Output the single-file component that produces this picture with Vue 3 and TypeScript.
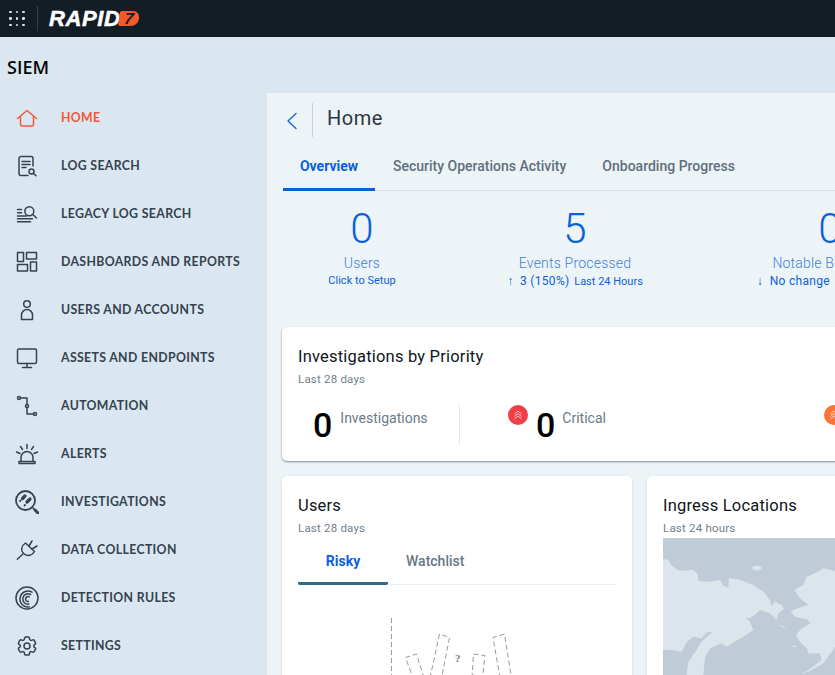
<script setup lang="ts">
const stroke = 'fill="none" stroke="currentColor" stroke-width="1.5" stroke-linecap="round" stroke-linejoin="round"'

const navItems = [
  { label: 'HOME', active: true, icon: `<g ${stroke}><path d="M2.5 12.5 12 4.5l9.500 8"/><path d="M5.500 10.500v8a1.500 1.500 0 0 0 1.500 1.500h10a1.500 1.500 0 0 0 1.500-1.500v-8"/></g>` },
  { label: 'LOG SEARCH', icon: `<g ${stroke}><path d="M18 12V4.500A2 2 0 0 0 16 2.500H6A2 2 0 0 0 4 4.500v15A2 2 0 0 0 6 21.500h7"/><path d="M7 7.500h8M7 10.500h8M7 13.500h4"/><circle cx="16.500" cy="17.500" r="2.500"/><path d="m18.500 19.500 2.500 2.300"/></g>` },
  { label: 'LEGACY LOG SEARCH', icon: `<g ${stroke}><circle cx="14.300" cy="9.200" r="4.500"/><path d="m17.800 12.500 3.700 3.500M2.500 7.500h4M2.500 10.700h4M2.500 14h9M2.500 16.800h15M2.500 19.700h13"/></g>` },
  { label: 'DASHBOARDS AND REPORTS', icon: `<g ${stroke}><rect x="2.500" y="2.500" width="6" height="9"/><rect x="11.500" y="2.500" width="10" height="6.500"/><rect x="2.500" y="14.500" width="10" height="6.500"/><rect x="15.500" y="12" width="6" height="9"/></g>` },
  { label: 'USERS AND ACCOUNTS', icon: `<g ${stroke}><circle cx="12" cy="6" r="3.300"/><path d="M6.500 21.500v-4.500a5.500 5.500 0 0 1 11 0v4.500z"/></g>` },
  { label: 'ASSETS AND ENDPOINTS', icon: `<g ${stroke}><rect x="2.500" y="3" width="19" height="14.500" rx="1.500"/><path d="M12 17.500v4M7.500 21.500h9"/></g>` },
  { label: 'AUTOMATION', icon: `<g ${stroke}><circle cx="4" cy="4" r="1.500"/><circle cx="12" cy="12" r="1.500"/><circle cx="20" cy="20" r="1.500"/><path d="M5.500 4H12v6.500M12 13.500V20h6.500"/></g>` },
  { label: 'ALERTS', icon: `<g ${stroke}><path d="M6 19v-3.500a6 6 0 0 1 12 0V19"/><path d="M4 21.500V19.500h16v2zM12 2.500v4M5.500 4.500l2 3M18.500 4.500l-2 3M1.500 10l3.500 1.500M22.500 10 19 11.500"/></g>` },
  { label: 'INVESTIGATIONS', icon: `<g fill="none" stroke="currentColor" stroke-linecap="round"><circle cx="10.500" cy="10.500" r="9.500" stroke-width="1.800"/><path d="m17.500 17.500 2 2" stroke-width="1.500"/><path d="m20 20 3 3" stroke-width="3"/><path d="m7.500 8.500 2.500-2.500M12 12l3-3" stroke-width="3.200"/><path d="m5 11 .5-.5M9.500 15.500l.5-.5" stroke-width="1.800"/></g>` },
  { label: 'DATA COLLECTION', icon: `<g ${stroke}><path d="m2.300 21.300 5.400-5"/><path d="M10.500 5 19.500 13.500C17 18 11.500 18.500 8.500 15.500S6 8 10.500 5Z"/><path d="m14 8 3-5M17 11l5-3"/></g>` },
  { label: 'DETECTION RULES', icon: `<g fill="none" stroke="currentColor" stroke-width="1.500" stroke-linecap="round"><circle cx="12" cy="12" r="11"/><path d="M17 6.100A8 8 0 1 0 14.400 20.900"/><path d="M15.600 8.500A5.200 5.200 0 1 0 13.900 18.100"/><path d="M14.250 10.800A2.500 2.500 0 1 0 13.400 15.500"/></g>` },
  { label: 'SETTINGS', icon: `<g ${stroke}><path d="M9.594 3.940c.09-.542.56-.94 1.110-.94h2.593c.55 0 1.020.398 1.110.94l.213 1.281c.063.374.313.686.645.870.074.040.147.083.22.127.324.196.72.257 1.075.124l1.217-.456a1.125 1.125 0 011.370.490l1.296 2.247a1.125 1.125 0 01-.26 1.431l-1.003.827c-.293.240-.438.613-.431.992a6.759 6.759 0 010 .255c-.007.378.138.750.43.990l1.005.828c.424.350.534.954.26 1.430l-1.298 2.247a1.125 1.125 0 01-1.369.491l-1.217-.456c-.355-.133-.750-.072-1.076.124a6.570 6.570 0 01-.22.128c-.331.183-.581.495-.644.869l-.213 1.280c-.09.543-.56.941-1.110.941h-2.594c-.55 0-1.020-.398-1.110-.940l-.213-1.281c-.062-.374-.312-.686-.644-.870a6.520 6.520 0 01-.22-.127c-.325-.196-.72-.257-1.076-.124l-1.217.456a1.125 1.125 0 01-1.369-.490l-1.297-2.247a1.125 1.125 0 01.26-1.431l1.004-.827c.292-.240.437-.613.43-.992a6.932 6.932 0 010-.255c.007-.378-.138-.750-.43-.990l-1.004-.828a1.125 1.125 0 01-.26-1.430l1.297-2.247a1.125 1.125 0 011.370-.491l1.216.456c.356.133.751.072 1.076-.124.072-.044.146-.087.22-.128.332-.183.582-.495.644-.869l.214-1.281z"/><circle cx="12" cy="12" r="3"/></g>` }
]

const pageTabs = ['Overview', 'Security Operations Activity', 'Onboarding Progress']
</script>

<template>
  <div class="app">
    <header class="topbar">
      <div class="launcher">
        <i v-for="n in 9" :key="n"></i>
      </div>
      <div class="logo">
        <span class="logo-word">RAPID</span><span class="logo-seven">7</span>
      </div>
    </header>

    <div class="body">
      <aside class="sidebar">
        <div class="product">SIEM</div>
        <nav>
          <a v-for="item in navItems" :key="item.label" class="nav-item" :class="{ active: item.active }">
            <svg class="nav-icon" viewBox="0 0 24 24" v-html="item.icon"></svg>
            <span>{{ item.label }}</span>
          </a>
        </nav>
      </aside>

      <main class="main">
        <div class="page-head">
          <svg class="back" viewBox="0 0 12 18"><path d="M10 1.500 2 9l8 7.500" fill="none" stroke="#1767d8" stroke-width="1.400" stroke-linecap="round" stroke-linejoin="round" /></svg>
          <h1>Home</h1>
        </div>

        <div class="page-tabs">
          <div v-for="(tab, i) in pageTabs" :key="tab" class="page-tab" :class="{ on: i === 0 }">{{ tab }}</div>
        </div>

        <div class="stats">
          <div class="stat first">
            <div class="stat-num">0</div>
            <div class="stat-label">Users</div>
            <div class="stat-sub">Click to Setup</div>
          </div>
          <div class="stat second">
            <div class="stat-num">5</div>
            <div class="stat-label">Events Processed</div>
            <div class="stat-sub"><span class="delta"><strong>↑</strong>&nbsp; 3 (150%)</span> Last 24 Hours</div>
          </div>
          <div class="stat third">
            <div class="stat-num">0</div>
            <div class="stat-label">Notable Behaviors</div>
            <div class="stat-sub"><span class="delta"><strong>↓</strong>&nbsp; No change</span> Last 24 Hours</div>
          </div>
        </div>

        <section class="card priority">
          <h2>Investigations by Priority</h2>
          <p class="range">Last 28 days</p>
          <div class="priority-row">
            <div class="count total">
              <b>0</b><span>Investigations</span>
            </div>
            <div class="count level">
              <em class="badge red"><svg viewBox="0 0 12 12"><path d="M2.500 5 6 2l3.500 3M2.500 7.500 6 4.500l3.500 3M2.500 10 6 7l3.500 3" fill="none" stroke="#fff" stroke-opacity=".8" stroke-width=".9" /></svg></em>
              <b>0</b><span class="tight">Critical</span>
            </div>
            <div class="count level">
              <em class="badge orange"><svg viewBox="0 0 12 12"><path d="M2.500 5 6 2l3.500 3M2.500 7.500 6 4.500l3.500 3M2.500 10 6 7l3.500 3" fill="none" stroke="#fff" stroke-opacity=".8" stroke-width=".9" /></svg></em>
              <b>0</b><span class="tight">High</span>
            </div>
          </div>
        </section>

        <div class="lower">
          <section class="card users">
            <h2>Users</h2>
            <p class="range">Last 28 days</p>
            <div class="user-tabs">
              <div class="user-tab on">Risky</div>
              <div class="user-tab">Watchlist</div>
            </div>
            <!-- leeres Diagramm, gestrichelte Balken -->
            <svg class="empty-chart" viewBox="0 0 318 60">
              <g fill="none" stroke="#8b8f93" stroke-width=".9" stroke-dasharray="5 3">
                <path d="M93.500 0v60" />
                <path d="M126 60 118.500 36 107.500 39.500 115 60" />
                <path d="M132 60 141.500 16 151.500 19.500 143.500 60" />
                <path d="M174 60 175.500 36 187 37.500 184.500 60" />
                <path d="M202 60 195 19.500 206.500 16 213.500 60" />
              </g>
              <text x="157" y="44" class="mark">?</text>
            </svg>
          </section>

          <section class="card ingress">
            <h2>Ingress Locations</h2>
            <p class="range">Last 24 hours</p>
            <svg class="map" viewBox="9 9 516 411" preserveAspectRatio="xMinYMin slice">
              <rect x="9" y="9" width="516" height="411" fill="#bfccd8" />
              <g fill="#dde5ec">
                <path d="M9 72 25 75 32 88 45 100 60 108 100 105 113 118 115 138 150 140 180 135 190 152 205 158 207 130 240 135 280 150 310 170 330 195 335 215 345 200 365 210 372 222 355 235 350 255 330 235 300 225 290 235 270 250 255 248 268 258 280 285 250 305 215 325 200 335 185 325 150 340 135 365 130 420 80 420 85 380 110 345 125 320 158 290 140 292 125 310 100 305 80 320 65 350 40 345 9 345Z" />
                <path d="M525 108 490 100 465 115 440 125 430 150 403 165 420 190 445 210 425 215 392 228 405 245 440 252 452 265 425 280 408 300 420 320 440 340 445 355 480 355 485 375 445 405 420 418 450 408 490 385 525 335Z" />
                <ellipse cx="291" cy="99" rx="14" ry="7" />
                <path d="M357 270 368 272 380 280 368 277Z" />
                <path d="M396 334 408 332 408 336 396 336Z" />
              </g>
            </svg>
          </section>
        </div>
      </main>
    </div>
  </div>
</template>

<style>
html,
body {
  margin: 0;
  overflow: hidden;
}
</style>

<style scoped>
.app {
  width: 835px;
  height: 675px;
  overflow: hidden;
  display: flex;
  flex-direction: column;
  background: #dbe7f0;
  font-family: Roboto, "Liberation Sans", sans-serif;
}

.topbar {
  flex: none;
  height: 37px;
  display: flex;
  align-items: center;
  background: #121d26;
}

.launcher {
  width: 16px;
  height: 16px;
  margin-left: 9px;
  margin-right: 12px;
  display: grid;
  grid-template-columns: repeat(3, 3px);
  grid-template-rows: repeat(3, 3px);
  justify-content: space-between;
  align-content: space-between;
}

.launcher i {
  width: 2.500px;
  height: 2.500px;
  border-radius: 50%;
  background: #dfe5e9;
}

.logo {
  height: 25px;
  display: flex;
  align-items: center;
  padding-left: 11px;
  border-left: 1px solid #33414c;
}

.logo-word {
  color: #fff;
  font: italic 700 22px/1 "Liberation Sans", sans-serif;
  letter-spacing: 0.6px;
  -webkit-text-stroke: 0.5px #fff;
}

.logo-seven {
  width: 20px;
  height: 15px;
  margin-left: -1px;
  border-radius: 2px 7px 7px 2px;
  background: #f4582b;
  color: #121d26;
  text-align: center;
  font: italic 700 16px/15px "Liberation Sans", sans-serif;
  transform: skewX(-8deg);
}

.body {
  flex: 1;
  min-height: 0;
  display: flex;
}

.sidebar {
  flex: none;
  width: 267px;
}

.product {
  height: 24px;
  margin: 18px 0 15px 7px;
  color: #05080a;
  font: 600 18px/24px "Open Sans", sans-serif;
}

.nav-item {
  height: 48px;
  display: flex;
  align-items: center;
  color: #33434f;
  font: 700 12.300px/1 Lato, sans-serif;
  letter-spacing: 0.35px;
}

.nav-item.active {
  color: #f4583a;
}

.nav-icon {
  flex: none;
  width: 24px;
  height: 24px;
  margin-left: 15px;
  margin-right: 22px;
}

.main {
  flex: none;
  width: 568px;
  margin-top: 56px;
  padding-top: 10px;
  box-sizing: border-box;
  background: #edf4f8;
}

.page-head {
  height: 34px;
  display: flex;
  align-items: center;
}

.back {
  width: 12px;
  height: 18px;
  margin-left: 19px;
  margin-top: 2px;
  margin-right: 14px;
}

.page-head h1 {
  height: 34px;
  margin: 0;
  padding-left: 14px;
  border-left: 1px solid #c5d2dc;
  color: #2b3640;
  font-size: 20px;
  font-weight: 400;
  line-height: 30px;
  letter-spacing: 0.5px;
}

.page-tabs {
  height: 48px;
  margin: 6px 0 0 16px;
  display: flex;
  box-sizing: border-box;
  border-bottom: 1px solid #d8e3ea;
}

.page-tab {
  height: 48px;
  padding: 0 18px;
  box-sizing: border-box;
  color: #5f6f7c;
  font-size: 14px;
  font-weight: 500;
  line-height: 46px;
  white-space: nowrap;
}

.page-tab.on {
  width: 92px;
  padding: 0;
  text-align: center;
  color: #0b5fdc;
  font-weight: 700;
  border-bottom: 3px solid #0b5fdc;
}

.stats {
  display: flex;
  padding: 14px 0 0 16px;
  height: 84px;
}

.stat {
  flex: none;
  text-align: center;
  color: #0b5fdc;
}

.stat.first {
  width: 158px;
}

.stat.second {
  width: 268px;
}

.stat.third {
  width: 242px;
}

.stat-num {
  height: 48px;
  font-size: 42px;
  font-weight: 300;
  line-height: 48px;
}

.stat-label {
  margin-top: 1px;
  color: #3d7fe0;
  font-size: 14px;
  font-weight: 300;
  line-height: 18px;
  letter-spacing: 0.2px;
}

.stat-sub {
  margin-top: 1px;
  font-size: 11px;
  line-height: 16px;
  white-space: nowrap;
}

.delta {
  margin-right: 2px;
  font-size: 12px;
  letter-spacing: 0.3px;
}

.card {
  box-sizing: border-box;
  border-radius: 5px;
  background: #fff;
}

.card h2 {
  margin: 0;
  color: #10161b;
  font-size: 16.500px;
  font-weight: 400;
  line-height: 22px;
  letter-spacing: 0.2px;
}

.range {
  margin: 3px 0 0;
  color: #6f7f8c;
  font-size: 11.500px;
  line-height: 16px;
  letter-spacing: 0.2px;
}

.priority {
  width: 700px;
  height: 134px;
  margin: 38px 0 0 15px;
  padding: 19px 16px 0;
  box-shadow: 0 1px 2px rgba(40, 50, 60, 0.55);
}

.priority-row {
  height: 40px;
  margin-top: 18px;
  display: flex;
}

.count {
  display: flex;
  flex: none;
}

.count b {
  color: #000;
  font-size: 34px;
  font-weight: 500;
  line-height: 40px;
}

.count span {
  margin-left: 8px;
  color: #6b7b87;
  font-size: 14px;
  line-height: 26px;
}

.count span.tight {
  margin-left: 7px;
}

.total {
  width: 146px;
  padding-left: 15px;
  border-right: 1px solid #dde7ee;
}

.level {
  width: 316px;
  box-sizing: border-box;
  padding-left: 48px;
}

.badge {
  width: 20px;
  height: 20px;
  margin-right: 8px;
  border-radius: 50%;
  display: flex;
  align-items: center;
  justify-content: center;
}

.badge svg {
  width: 12px;
  height: 12px;
}

.red {
  background: #ef3e46;
}

.orange {
  background: #f7743a;
}

.lower {
  margin: 15px 0 0 15px;
  display: flex;
  gap: 15px;
}

.users {
  flex: none;
  width: 350px;
  height: 240px;
  padding: 19px 16px 0;
  box-shadow: 0 1px 3px rgba(120, 140, 155, 0.3);
}

.user-tabs {
  height: 48px;
  margin-top: 1px;
  display: flex;
  box-sizing: border-box;
  border-bottom: 1px solid #e6eef4;
}

.user-tab {
  height: 48px;
  padding: 0 18px;
  box-sizing: border-box;
  color: #677783;
  font-size: 14px;
  font-weight: 500;
  line-height: 49px;
}

.user-tab.on {
  width: 90px;
  padding: 0;
  text-align: center;
  color: #0b5fdc;
  font-weight: 700;
  border-bottom: 3px solid #2f6b85;
  border-radius: 0 0 2px 2px;
}

.empty-chart {
  display: block;
  width: 318px;
  height: 60px;
  margin-top: 33px;
}

.mark {
  fill: #77797c;
  font: 700 11px "Liberation Serif", serif;
}

.ingress {
  flex: none;
  width: 300px;
  height: 240px;
  padding: 19px 16px 0;
  box-shadow: 0 1px 3px rgba(120, 140, 155, 0.3);
}

.map {
  display: block;
  width: 172px;
  height: 137px;
  margin-top: 2px;
}
</style>
